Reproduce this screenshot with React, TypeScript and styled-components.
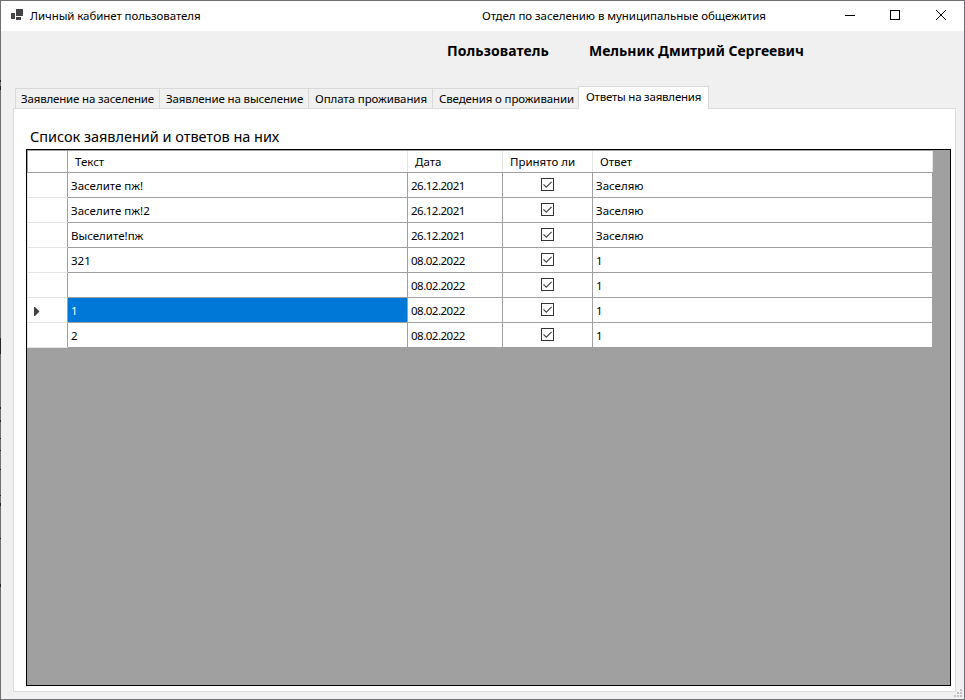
import React from "react";
import styled, { createGlobalStyle, css } from "styled-components";

const GlobalStyle = createGlobalStyle`
  * { box-sizing: border-box; }
  body { margin: 0; overflow: hidden; font-family: "Noto Sans", "Open Sans", sans-serif; color: #000; }
`;

const Window = styled.div`
  width: 965px;
  height: 700px;
  display: flex;
  flex-direction: column;
  background: #f0f0f0;
  border: 1px solid #707072;
`;

const TitleBar = styled.header`
  height: 30px;
  flex: none;
  display: flex;
  align-items: center;
  background: #fff;
  padding-left: 10px;
`;

const Label = styled.span<{ $size?: number; $spacing?: number; $bold?: boolean }>`
  display: block;
  white-space: pre;
  font-size: ${(p) => p.$size ?? 11.5}px;
  letter-spacing: ${(p) => p.$spacing ?? 0}px;
  font-weight: ${(p) => (p.$bold ? 700 : 400)};
`;

const AppTitle = styled.div`
  width: 452px;
  margin-left: 7px;
  line-height: 30px;
`;

const Department = styled.div`
  flex: 1;
  line-height: 30px;
`;

const Controls = styled.div`
  display: flex;
  height: 30px;
`;

const ControlButton = styled.button`
  width: 46px;
  height: 30px;
  padding: 0;
  border: 0;
  background: none;
  display: block;
  svg { display: block; }
`;

const UserLine = styled.div`
  height: 55px;
  flex: none;
  display: flex;
  padding: 8px 0 0 446px;
  line-height: 24px;
`;

const UserCaption = styled.div`
  width: 142px;
`;

const TabStrip = styled.nav`
  height: 22px;
  flex: none;
  display: flex;
  align-items: flex-end;
  padding-left: 14px;
`;

const Tab = styled.div<{ $width: number; $inset?: number; $active?: boolean }>`
  width: ${(p) => p.$width}px;
  height: 20px;
  padding-left: ${(p) => p.$inset ?? 5}px;
  line-height: 19px;
  border-top: 1px solid #d9d9d9;
  border-left: 1px solid #d9d9d9;
  ${(p) =>
    p.$active &&
    css`
      height: 23px;
      margin-bottom: -1px;
      line-height: 20px;
      border-right: 1px solid #d9d9d9;
      background: #fff;
      z-index: 1;
    `}
`;

const Page = styled.main`
  width: 943px;
  height: 584px;
  flex: none;
  margin-left: 12px;
  padding: 16px 0 0 12px;
  background: #fff;
  border: 1px solid #dcdcdc;
`;

const Caption = styled.h2`
  margin: 0;
  height: 24px;
  padding-left: 4px;
  line-height: 22px;
  font-weight: 400;
`;

const GridBox = styled.div`
  width: 925px;
  height: 537px;
  background: #a0a0a0;
  border: 1px solid #000;
`;

const columns = "40px 340px 95px 90px 340px";

const HeaderRow = styled.div`
  display: grid;
  grid-template-columns: ${columns};
  grid-template-rows: 21px;
  width: 906px;
  height: 23px;
  border-left: 1px solid #a0a0a0;
  border-top: 1px solid #a0a0a0;
  border-bottom: 1px solid #a0a0a0;
`;

const HeaderCell = styled.div<{ $strong?: boolean }>`
  background: #fff;
  border-right: 1px solid ${(p) => (p.$strong ? "#a0a0a0" : "#e5e5e5")};
  padding-left: 7px;
  line-height: 21px;
`;

const Row = styled.div`
  display: grid;
  grid-template-columns: ${columns};
  width: 906px;
  height: 25px;
  border-left: 1px solid #e5e5e5;
`;

const RowHead = styled.div`
  display: flex;
  align-items: center;
  padding: 2px 0 0 6px;
  background: #fff;
  border-right: 1px solid #a0a0a0;
  border-bottom: 1px solid #e5e5e5;
`;

const Cell = styled.div<{ $selected?: boolean }>`
  padding-left: 3px;
  line-height: 25px;
  height: 25px;
  background: ${(p) => (p.$selected ? "#0078d7" : "#fff")};
  color: ${(p) => (p.$selected ? "#fff" : "#000")};
  border-right: 1px solid #a0a0a0;
  border-bottom: 1px solid #a0a0a0;
`;

const CheckCell = styled(Cell)`
  display: flex;
  justify-content: center;
  padding: 5px 0 0;
`;

const Grip = styled.svg`
  position: absolute;
  left: 954px;
  top: 689px;
`;

const EdgeMarks = styled.svg`
  position: absolute;
  left: 0;
  top: 0;
`;

const FormIcon = () => (
  <svg width="12" height="14" shapeRendering="crispEdges" fill="#444446">
    <path d="M5 0h7v7H5zM0 4h4v6H0zM5 8h5v3H5z" />
  </svg>
);

const Checkbox = () => (
  <svg width="13" height="13" fill="none">
    <rect x=".5" y=".5" width="12" height="12" stroke="#333" />
    <path d="M2.5 6.3l2.8 2.8 5.3-5.3" stroke="#444" strokeWidth="1.2" />
  </svg>
);

const CurrentRowArrow = () => (
  <svg width="6" height="9" fill="#404040">
    <path d="M0 0h1l4.5 4.5L1 9H0z" />
  </svg>
);

const tabs = [
  { title: "Заявление на заселение", width: 144, spacing: -0.17 },
  { title: "Заявление на выселение", width: 149, spacing: -0.13, inset: 6 },
  { title: "Оплата проживания", width: 124, spacing: -0.1, inset: 6 },
  { title: "Сведения о проживании", width: 146, spacing: -0.13, inset: 6 },
  { title: "Ответы на заявления", width: 131, spacing: -0.22, inset: 7, active: true },
];

const rows = [
  { text: "Заселите пж!", date: "26.12.2021", answer: "Заселяю" },
  { text: "Заселите пж!2", date: "26.12.2021", answer: "Заселяю" },
  { text: "Выселите!пж", date: "26.12.2021", answer: "Заселяю" },
  { text: "321", date: "08.02.2022", answer: "1" },
  { text: "", date: "08.02.2022", answer: "1" },
  { text: "1", date: "08.02.2022", answer: "1", current: true },
  { text: "2", date: "08.02.2022", answer: "1" },
];

const edgeMarks: [number, number][] = [
  [80, 2], [86, 4], [338, 16], [407, 2], [420, 2], [438, 1], [450, 1], [469, 1],
  [495, 1], [503, 3], [538, 1], [584, 3],
];

export default function App() {
  return (
    <>
      <GlobalStyle />
      <Window>
        <TitleBar>
          <FormIcon />
          <AppTitle><Label $spacing={-0.08}>Личный кабинет пользователя</Label></AppTitle>
          <Department><Label $spacing={-0.05}>Отдел по заселению в муниципальные общежития</Label></Department>
          <Controls>
            <ControlButton aria-label="Свернуть">
              <svg width="46" height="30"><path d="M19 14.5h10" stroke="#000" /></svg>
            </ControlButton>
            <ControlButton aria-label="Развернуть">
              <svg width="46" height="30"><rect x="18.5" y="9.5" width="9" height="9" fill="none" stroke="#000" /></svg>
            </ControlButton>
            <ControlButton aria-label="Закрыть">
              <svg width="46" height="30"><path d="M18 9l10 10M28 9L18 19" stroke="#000" /></svg>
            </ControlButton>
          </Controls>
        </TitleBar>
        <UserLine>
          <UserCaption><Label $size={14} $spacing={0.08} $bold>Пользователь</Label></UserCaption>
          <Label $size={14} $spacing={-0.02} $bold>Мельник Дмитрий Сергеевич</Label>
        </UserLine>
        <TabStrip>
          {tabs.map((t) => (
            <Tab key={t.title} $width={t.width} $inset={t.inset} $active={t.active}>
              <Label $spacing={t.spacing}>{t.title}</Label>
            </Tab>
          ))}
        </TabStrip>
        <Page>
          <Caption><Label $size={14.5} $spacing={-0.03}>Список заявлений и ответов на них</Label></Caption>
          <GridBox>
            <HeaderRow>
              <HeaderCell $strong />
              <HeaderCell><Label>Текст</Label></HeaderCell>
              <HeaderCell><Label>Дата</Label></HeaderCell>
              <HeaderCell><Label>Принято ли</Label></HeaderCell>
              <HeaderCell><Label>Ответ</Label></HeaderCell>
            </HeaderRow>
            {rows.map((r, i) => (
              <Row key={i}>
                <RowHead>{r.current && <CurrentRowArrow />}</RowHead>
                <Cell $selected={r.current}><Label>{r.text}</Label></Cell>
                <Cell><Label $spacing={-0.5}>{r.date}</Label></Cell>
                <CheckCell><Checkbox /></CheckCell>
                <Cell><Label>{r.answer}</Label></Cell>
              </Row>
            ))}
          </GridBox>
        </Page>
      </Window>
      <Grip width="8" height="8" fill="#bfbfbf" shapeRendering="crispEdges">
        <path d="M6 0h2v2H6zM3 3h2v2H3zM6 3h2v2H6zM0 6h2v2H0zM3 6h2v2H3zM6 6h2v2H6z" />
      </Grip>
      <EdgeMarks width="1" height="700" fill="#252528">
        {edgeMarks.map(([y, h]) => <rect key={y} y={y} width="1" height={h} />)}
      </EdgeMarks>
    </>
  );
}
